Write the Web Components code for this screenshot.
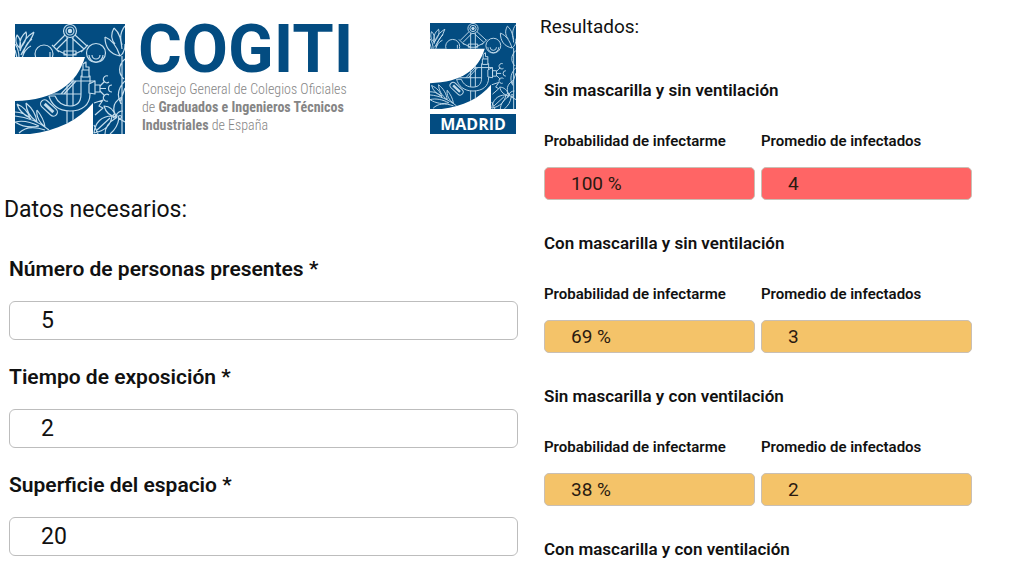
<!DOCTYPE html>
<html lang="es">
<head>
<meta charset="utf-8">
<meta name="viewport" content="width=device-width, initial-scale=1">
<title>COGITI – Calculadora de contagio</title>
<style>
  body { margin: 0; background: #fff; color: #111; font-family: Roboto, "Liberation Sans", sans-serif; }
</style>
</head>
<body>
<contagion-page></contagion-page>

<template id="emblem-template">
  <style>
    :host { display: block; width: var(--emblem-size, 110px); flex: none; }
    svg { display: block; width: 100%; height: auto; }
  </style>
  <svg viewBox="0 0 110 110" aria-hidden="true">
    <defs>
      <clipPath id="shape"><path d="M0 0H110V110H78V79C64 96 42 107 15 110H0V77C40 76 62 60 70 33H0Z"/></clipPath>
    </defs>
    <path fill="#034c81" d="M0 0H110V110H78V79C64 96 42 107 15 110H0V77C40 76 62 60 70 33H0Z"/>
    <g clip-path="url(#shape)" fill="none" stroke="#c3dcec" stroke-width="1.2" stroke-linejoin="round">
      <!-- Atomium -->
      <path d="M52 13V110M58 13V110M50 11L39 22M53 14L42 25M60 11L72 22M57 14L69 25M37 21L44 28M73 21L66 28M42 26L52 31M68 26L58 31M49 27H61V31H49Z"/>
      <g fill="#034c81"><circle cx="55" cy="7" r="6.5"/><circle cx="55" cy="7" r="4"/><circle cx="29" cy="30" r="9"/><circle cx="81" cy="29" r="9.5"/></g>
      <circle cx="55" cy="7" r="1.6" fill="#c3dcec"/>
      <path d="M74 31A7 7 0 0 0 88 31M77 31A4 4 0 0 0 85 31M35 28V33"/>
      <!-- Retort and micrometer -->
      <path fill="#034c81" d="M66 52H75V70C75 81 67 87 55 87C43 87 36 80 34 72H40C43 79 48 82 55 82C63 82 66 77 66 70Z"/>
      <path fill="#034c81" d="M67 46H74V53H67ZM68 46V40L71 38V43H74V46"/>
      <path d="M28 57H80M30 70H66M46 70L58 57M49 70L61 57"/>
      <path fill="#034c81" d="M74 60L80 57V70L74 69ZM80 61H85V68H80Z"/>
      <path d="M85 62L90 57M85 64.500H91M85 67L90 72M93 52A3.500 3.500 0 1 0 94 58M97 61A3.500 3.500 0 1 0 97 68M94 71A3.500 3.500 0 1 0 93 77"/>
      <!-- Capsule -->
      <g transform="rotate(43 34 84)"><rect x="24" y="80" width="20" height="8" rx="4"/><path stroke-width="3" d="M28 84H40"/></g>
      <!-- Upper left blades -->
      <path d="M2 11C6 15 6 19 5 24C1 21 0 16 2 11ZM11 8C13 14 9 20 5 25C4 18 6 12 11 8ZM19 8C17 16 10 22 6 31M19 8C12 12 7 19 5 27M17 15C13 18 9 24 8 31M16 22C11 24 9 28 7 34M0 20C3 24 4 29 4 34M0 26L2 34"/>
      <!-- Lower left branch -->
      <path d="M0 92C12 93 24 98 34 106M0 88C8 88 12 91 16 95M2 80C4 87 9 91 15 94M2 80C9 83 13 88 15 94M11 79C11 86 15 93 22 98M11 79C17 84 21 90 22 98M22 86C21 92 24 98 30 103M22 86C26 91 29 96 30 103M0 98C8 96 16 98 24 102M0 98C8 103 16 104 24 102M4 109C10 103 19 102 30 106"/>
      <!-- Upper right tulip and leaves -->
      <path d="M90 13C90 23 95 30 105 32M90 13C98 16 102 23 105 32M99 4C95 11 97 17 100 20M99 4C105 9 106 16 107 25M110 2C105 8 105 15 107 21M105 32C108 30 110 26 110 20M107 32V110M110 35C103 41 103 50 109 55M110 57C104 63 101 71 106 80M110 64L105 78"/>
      <!-- Lower right flower -->
      <path d="M89 82C91 89 95 92 101 93C99 86 95 82 89 82ZM100 90C97 83 100 77 107 73M97 92C86 92 80 99 79 109C89 107 96 101 97 92ZM95 94L82 106M101 94C94 98 90 104 90 110M104 94C103 101 100 106 95 110M108 87C104 87 102 89 101 92M103 94L110 98M79 79L88 76L84 82L88 84L80 91M79 101L83 110"/>
      <circle cx="100" cy="92" r="2"/><circle cx="105" cy="93" r="1.500"/>
    </g>
  </svg>
</template>

<template id="brand-template">
  <style>
    :host { display: flex; align-items: flex-end; padding: 20px 11px 0 15px; }
    .words { margin-left: 13px; white-space: nowrap; }
    .name { font-size: 67px; line-height: 58px; padding-bottom: 2px; font-weight: 700; color: #034c81; }
    .full { margin: 0; padding-left: 4px; font: 300 14px/18px "Roboto Condensed", "Liberation Sans Narrow", Roboto, sans-serif; color: #858585; }
    .full b { font-weight: 700; }
    .madrid { margin-left: auto; display: grid; gap: 5px; --emblem-size: 86px; }
    .city { background: #034c81; color: #fff; text-align: center; font: 700 16px/20px "Open Sans", sans-serif; }
  </style>
  <cogiti-emblem></cogiti-emblem>
  <div class="words">
    <div class="name">COGITI</div>
    <p class="full">Consejo General de Colegios Oficiales<br>de <b>Graduados e Ingenieros Técnicos</b><br><b>Industriales</b> de España</p>
  </div>
  <div class="madrid">
    <cogiti-emblem></cogiti-emblem>
    <div class="city">MADRID</div>
  </div>
</template>

<template id="field-template">
  <style>
    :host { display: grid; gap: 20px; }
    label { font-size: 21px; line-height: 24px; font-weight: 600; }
    input { box-sizing: border-box; width: 100%; height: 39px; margin: 0; padding: 0 31px; border: 1px solid #bdbdbd; border-radius: 6px; background: #fff; color: #111; font: 400 23px/28px Roboto, sans-serif; }
  </style>
  <label for="value"><slot></slot></label>
  <input id="value" type="text" inputmode="numeric" required>
</template>

<template id="result-template">
  <style>
    :host { display: grid; gap: 29px; }
    h3 { margin: 0; font-size: 17px; line-height: 24px; font-weight: 600; }
    .row { display: grid; grid-template-columns: 1fr 1fr; gap: 6px; }
    .cell { display: grid; gap: 16px; }
    label { font-size: 15px; line-height: 20px; font-weight: 600; }
    input { box-sizing: border-box; width: 100%; height: 33px; margin: 0; padding: 0 26px; border: 1px solid #c9bfb4; border-radius: 5px; background: #f4c369; color: #2a1a10; font: 400 19px/24px Roboto, sans-serif; }
    :host([level="high"]) input { background: #ff6565; }
  </style>
  <h3><slot></slot></h3>
  <div class="row">
    <div class="cell"><label for="risk">Probabilidad de infectarme</label><input id="risk" type="text" readonly></div>
    <div class="cell"><label for="mean">Promedio de infectados</label><input id="mean" type="text" readonly></div>
  </div>
</template>

<template id="page-template">
  <style>
    :host { display: grid; grid-template-columns: 527fr 497fr; align-items: start; }
    h2 { margin: 0; font-weight: 400; }
    .data h2 { margin-top: 62px; padding-left: 4px; font-size: 23px; line-height: 28px; }
    .fields { display: grid; gap: 25px; padding: 33px 9px 20px; }
    .results { padding-top: 15px; }
    .results h2 { padding-left: 13px; font-size: 19px; line-height: 24px; }
    .list { display: grid; gap: 31px; padding: 39px 52px 0 17px; }
    .next { margin: 0; font-size: 17px; line-height: 24px; font-weight: 600; }
  </style>
  <section class="data">
    <brand-header></brand-header>
    <h2>Datos necesarios:</h2>
    <div class="fields">
      <data-field value="5">Número de personas presentes *</data-field>
      <data-field value="2">Tiempo de exposición *</data-field>
      <data-field value="20">Superficie del espacio *</data-field>
    </div>
  </section>
  <section class="results">
    <h2>Resultados:</h2>
    <div class="list">
      <result-group level="high" risk="100 %" mean="4">Sin mascarilla y sin ventilación</result-group>
      <result-group risk="69 %" mean="3">Con mascarilla y sin ventilación</result-group>
      <result-group risk="38 %" mean="2">Sin mascarilla y con ventilación</result-group>
      <h3 class="next">Con mascarilla y con ventilación</h3>
    </div>
  </section>
</template>

<script>
  class TemplateElement extends HTMLElement {
    constructor() {
      super();
      const template = document.getElementById(this.constructor.template);
      this.attachShadow({ mode: 'open' }).append(template.content.cloneNode(true));
    }
  }
  class CogitiEmblem extends TemplateElement { static template = 'emblem-template'; }
  class BrandHeader extends TemplateElement { static template = 'brand-template'; }
  class DataField extends TemplateElement {
    static template = 'field-template';
    connectedCallback() {
      this.shadowRoot.getElementById('value').value = this.getAttribute('value') || '';
    }
  }
  class ResultGroup extends TemplateElement {
    static template = 'result-template';
    connectedCallback() {
      for (const name of ['risk', 'mean'])
        this.shadowRoot.getElementById(name).value = this.getAttribute(name) || '';
    }
  }
  class ContagionPage extends TemplateElement { static template = 'page-template'; }

  customElements.define('cogiti-emblem', CogitiEmblem);
  customElements.define('brand-header', BrandHeader);
  customElements.define('data-field', DataField);
  customElements.define('result-group', ResultGroup);
  customElements.define('contagion-page', ContagionPage);
</script>
</body>
</html>
